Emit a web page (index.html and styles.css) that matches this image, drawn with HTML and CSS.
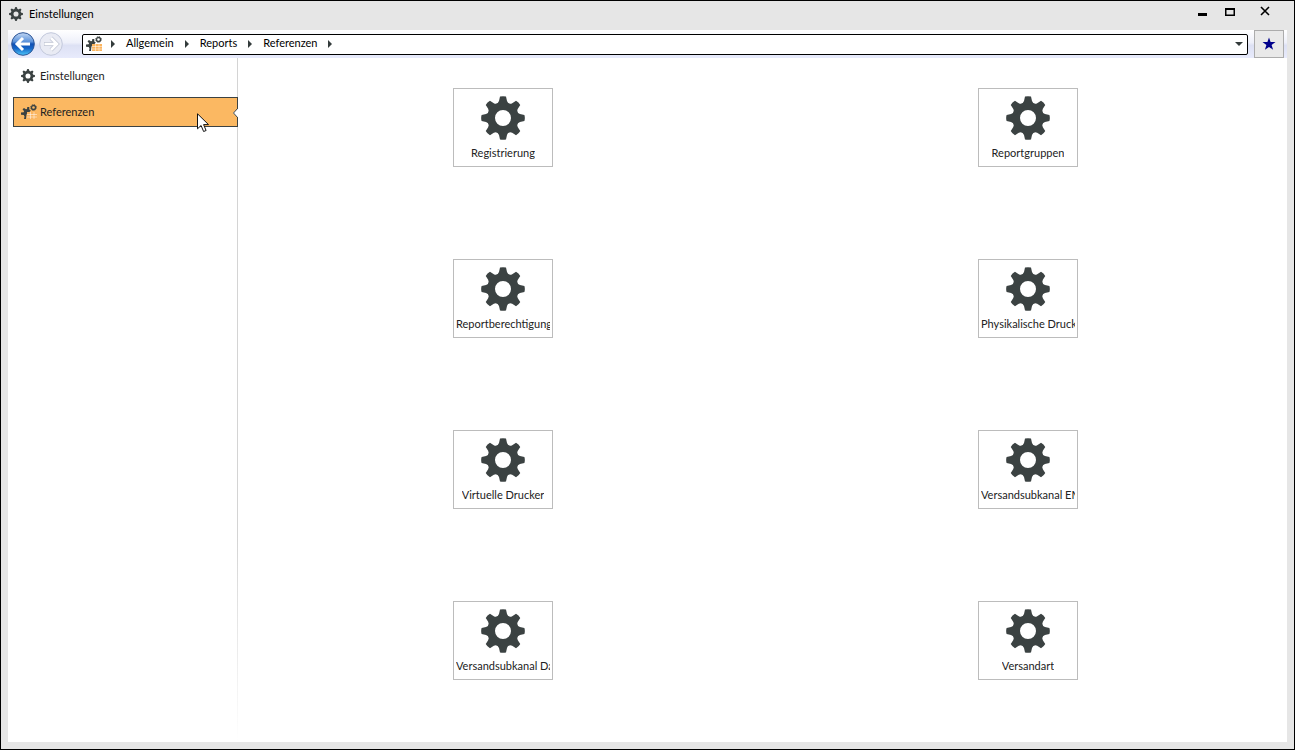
FILE: index.html
```html
<!DOCTYPE html>
<html lang="de">
<head>
    <meta charset="UTF-8">
    <meta name="viewport" content="width=device-width, initial-scale=1.0">
    <title>Einstellungen</title>
    <link rel="stylesheet" href="styles.css">
</head>
<body>
    <svg class="symbols" aria-hidden="true">
        <defs>
            <path id="tooth" d="M19 .6Q22-.3 25 .6L26 5Q26.600 7.500 30 8.500V11H14V8.500Q17.400 7.500 18 5Z"/>
            <symbol id="gear" viewBox="0 0 44 44">
                <circle cx="22" cy="22" r="11.5" fill="none" stroke="currentColor" stroke-width="7"/>
                <g fill="currentColor">
                    <use href="#tooth"/>
                    <use href="#tooth" transform="rotate(45 22 22)"/>
                    <use href="#tooth" transform="rotate(90 22 22)"/>
                    <use href="#tooth" transform="rotate(135 22 22)"/>
                    <use href="#tooth" transform="rotate(180 22 22)"/>
                    <use href="#tooth" transform="rotate(225 22 22)"/>
                    <use href="#tooth" transform="rotate(270 22 22)"/>
                    <use href="#tooth" transform="rotate(315 22 22)"/>
                </g>
            </symbol>
            <symbol id="references" viewBox="0 0 16 16">
                <path d="M5 15 3 15l.5-2.500L2.800 11 0 10.800V8.500l2.600-.3.5-1L1.500 5.300 3 3.900l1.900 1.400L6 4.900 6.300 3h2v2.500l1.500 1L8.500 8Q5.500 8.500 5.300 12Z" fill="currentColor"/>
                <circle cx="12.500" cy="3.500" r="2" fill="none" stroke="currentColor" stroke-width="1.300"/>
                <circle cx="12.500" cy="3.500" r="2.900" fill="none" stroke="currentColor" stroke-width="1" stroke-dasharray="1.100 1.178"/>
                <path class="sheet" d="M6 8h10v7H6z"/>
                <path class="sheet-lines" d="M6 10.500h10M6 13h10M9.500 8v7M13 8v7" fill="none" stroke-width=".5"/>
            </symbol>
        </defs>
    </svg>

    <div class="window">
        <header class="titlebar">
            <svg class="icon-small"><use href="#gear"/></svg>
            <h1>Einstellungen</h1>
            <div class="window-buttons">
                <button type="button" aria-label="Minimieren">
                    <svg viewBox="0 0 12 12"><path d="M2 7h9v3H2z"/></svg>
                </button>
                <button type="button" aria-label="Maximieren">
                    <svg viewBox="0 0 12 12"><path d="M1 2h10v8H1zM2.500 4v4.500h7V4z" fill-rule="evenodd"/></svg>
                </button>
                <button type="button" class="close" aria-label="Schließen">
                    <svg viewBox="0 0 12 12"><path d="M2 1l8 8M10 1l-8 8" fill="none" stroke="#000" stroke-width="1.600"/></svg>
                </button>
            </div>
        </header>

        <div class="toolbar">
            <div class="history">
                <button type="button" aria-label="Zurück">
                    <svg viewBox="0 0 24 24">
                        <defs>
                            <linearGradient id="blue" x1="0" y1="0" x2="0" y2="1">
                                <stop offset="0" stop-color="#c3d8f4"/>
                                <stop offset=".4" stop-color="#5a91da"/>
                                <stop offset=".5" stop-color="#0f4fb4"/>
                                <stop offset=".7" stop-color="#1767c8"/>
                                <stop offset="1" stop-color="#4cc8fa"/>
                            </linearGradient>
                        </defs>
                        <circle cx="12" cy="12" r="11.300" fill="url(#blue)" stroke="#2d5596"/>
                        <path d="M12 6 6 12l6 6M6.500 12H19" fill="none" stroke="#fff" stroke-width="3"/>
                    </svg>
                </button>
                <button type="button" aria-label="Vorwärts" disabled>
                    <svg viewBox="0 0 24 24">
                        <circle cx="12" cy="12" r="11.300" fill="#e9ebf4" stroke="#c3c9dc"/>
                        <path d="M12 6l6 6-6 6M18 12H5" fill="none" stroke="#bfc4d3" stroke-width="4"/>
                        <path d="M12 6l6 6-6 6M17.500 12H5.500" fill="none" stroke="#fff" stroke-width="2.600"/>
                    </svg>
                </button>
            </div>
            <nav class="breadcrumb" aria-label="Pfad">
                <svg class="icon-ref"><use href="#references"/></svg>
                <span class="arrow"></span>
                <a href="#">Allgemein</a>
                <span class="arrow"></span>
                <a href="#">Reports</a>
                <span class="arrow"></span>
                <a href="#">Referenzen</a>
                <span class="arrow"></span>
                <button type="button" class="dropdown" aria-label="Verlauf"></button>
            </nav>
            <button type="button" class="favorite" aria-label="Favorit">
                <svg viewBox="0 0 14 14"><path d="M7 .5 8.600 5.100H13.500L9.600 8l1.500 4.800L7 9.900l-4.100 2.900L4.400 8 .5 5.100h4.900z"/></svg>
            </button>
        </div>

        <div class="content">
            <nav class="sidebar" aria-label="Navigation">
                <a class="nav-item" href="#">
                    <svg class="icon-small"><use href="#gear"/></svg>
                    <span>Einstellungen</span>
                </a>
                <a class="nav-item active" href="#">
                    <svg class="icon-ref"><use href="#references"/></svg>
                    <span>Referenzen</span>
                    <svg class="notch" viewBox="0 0 5 10"><path d="M5 0 0 5l5 5z" fill="#fff"/><path d="M5 0 .5 5 5 10" fill="none" stroke="#3c4242"/></svg>
                    <svg class="cursor" viewBox="0 0 12 20"><path d="M.5 .8v15l3.600-3.300 2.500 6 2.500-1-2.500-5.900h4.900z" fill="#fff" stroke="#111"/></svg>
                </a>
            </nav>

            <main class="tiles">
                <button type="button" class="tile"><svg><use href="#gear"/></svg><span>Registrierung</span></button>
                <button type="button" class="tile"><svg><use href="#gear"/></svg><span>Reportgruppen</span></button>
                <button type="button" class="tile"><svg><use href="#gear"/></svg><span class="long">Reportberechtigung</span></button>
                <button type="button" class="tile"><svg><use href="#gear"/></svg><span class="long">Physikalische Druck</span></button>
                <button type="button" class="tile"><svg><use href="#gear"/></svg><span>Virtuelle Drucker</span></button>
                <button type="button" class="tile"><svg><use href="#gear"/></svg><span class="long">Versandsubkanal EM</span></button>
                <button type="button" class="tile"><svg><use href="#gear"/></svg><span class="long">Versandsubkanal Da</span></button>
                <button type="button" class="tile"><svg><use href="#gear"/></svg><span>Versandart</span></button>
            </main>
        </div>
    </div>
</body>
</html>
```
FILE: styles.css
```css
* {
    box-sizing: border-box;
}

body {
    margin: 0;
    font-family: Lato, "Open Sans", sans-serif;
    font-size: 11px;
    line-height: 16px;
    color: #222;
}

button {
    margin: 0;
    padding: 0;
    border: none;
    background: none;
    font: inherit;
    color: inherit;
}

a {
    color: inherit;
    text-decoration: none;
}

svg {
    display: block;
    flex: none;
}

.symbols {
    position: absolute;
    width: 0;
    height: 0;
}

.window {
    display: flex;
    flex-direction: column;
    min-height: 100vh;
    padding: 0 7px 7px;
    border: 1px solid #000;
    background-color: #e6e6e6;
}

/* Titelleiste */
.titlebar {
    display: flex;
    align-items: center;
    height: 29px;
    padding-bottom: 4px;
    color: #000;
}

.titlebar h1 {
    flex: 1;
    margin: 0 0 0 6px;
    font-size: 11px;
    font-weight: normal;
}

.icon-small {
    width: 14px;
    height: 14px;
    color: #3b4242;
}

.icon-ref {
    width: 16px;
    height: 16px;
    color: #3b4242;
}

.titlebar .icon-small {
    margin-left: 1px;
}

.window-buttons {
    display: flex;
    gap: 16px;
    margin-right: 16px;
    padding-bottom: 4px;
}

.window-buttons svg {
    width: 12px;
    height: 12px;
}

.window-buttons .close {
    margin-left: 7px;
}

/* Werkzeugleiste */
.toolbar {
    display: flex;
    align-items: center;
    height: 28px;
    padding-right: 3px;
    background: linear-gradient(#fff, #eef0fa 45%, #dde1f4 55%, #e8ebfc);
}

.history {
    display: flex;
    gap: 4px;
    margin-left: 3px;
}

.history svg {
    width: 24px;
    height: 24px;
}

.breadcrumb {
    display: flex;
    flex: 1;
    align-items: center;
    height: 21px;
    margin: 0 6px 0 19px;
    padding: 0 4px 0 3px;
    border: 1px solid #000;
    border-radius: 2px;
    background-color: #fff;
    color: #000;
}

.breadcrumb a {
    margin: 0 11px 2px;
}

.arrow {
    border: 4px solid transparent;
    border-left-color: #333b3b;
    border-right: none;
}

.icon-ref + .arrow {
    margin-left: 9px;
}

.dropdown {
    margin-left: auto;
    border: 4px solid transparent;
    border-top-color: #333b3b;
    border-bottom: none;
}

.favorite {
    display: flex;
    align-items: center;
    justify-content: center;
    width: 30px;
    height: 28px;
    border: 1px solid #acacac;
    background-color: #e9e9e9;
}

.favorite svg {
    width: 14px;
    height: 14px;
    fill: #00008b;
}

/* Inhalt */
.content {
    display: flex;
    flex: 1;
    background-color: #fff;
}

.sidebar {
    display: flex;
    flex-direction: column;
    gap: 6px;
    width: 230px;
    padding: 3px 0 0 5px;
    background: linear-gradient(#d4d4d4 70%, #fff) right / 1px 100% no-repeat;
}

.nav-item {
    display: flex;
    align-items: center;
    gap: 5px;
    height: 30px;
    padding-left: 8px;
}

.nav-item.active {
    position: relative;
    gap: 3px;
    padding-left: 7px;
    border: 1px solid #3c4242;
    background-color: #fbb862;
}

.notch {
    position: absolute;
    top: 10px;
    right: -1px;
    width: 5px;
    height: 10px;
}

.cursor {
    position: absolute;
    top: 15px;
    right: 28px;
    width: 12px;
    height: 20px;
}

.sheet {
    fill: #fbb45e;
}

.sheet-lines {
    stroke: #fff;
}

.active .sheet {
    fill: #ffe9cf;
}

.active .sheet-lines {
    stroke: #fbb862;
}

.tiles {
    display: grid;
    flex: 1;
    grid-template-columns: repeat(2, 1fr);
    grid-template-rows: repeat(4, 1fr);
    column-gap: 7px;
    justify-items: center;
    padding-left: 6px;
}

.tile {
    display: flex;
    flex-direction: column;
    align-items: center;
    gap: 5px;
    width: 100px;
    height: 79px;
    margin-top: 30px;
    padding: 7px 2px 0;
    border: 1px solid #bcbcbc;
    background-color: #fff;
}

.tile svg {
    width: 44px;
    height: 44px;
    color: #3b4242;
}

.tile span {
    max-width: 100%;
    overflow: hidden;
    white-space: nowrap;
}

/* zu lange Beschriftungen werden rechts abgeschnitten */
.tile .long {
    width: 100%;
    text-align: left;
}
```
